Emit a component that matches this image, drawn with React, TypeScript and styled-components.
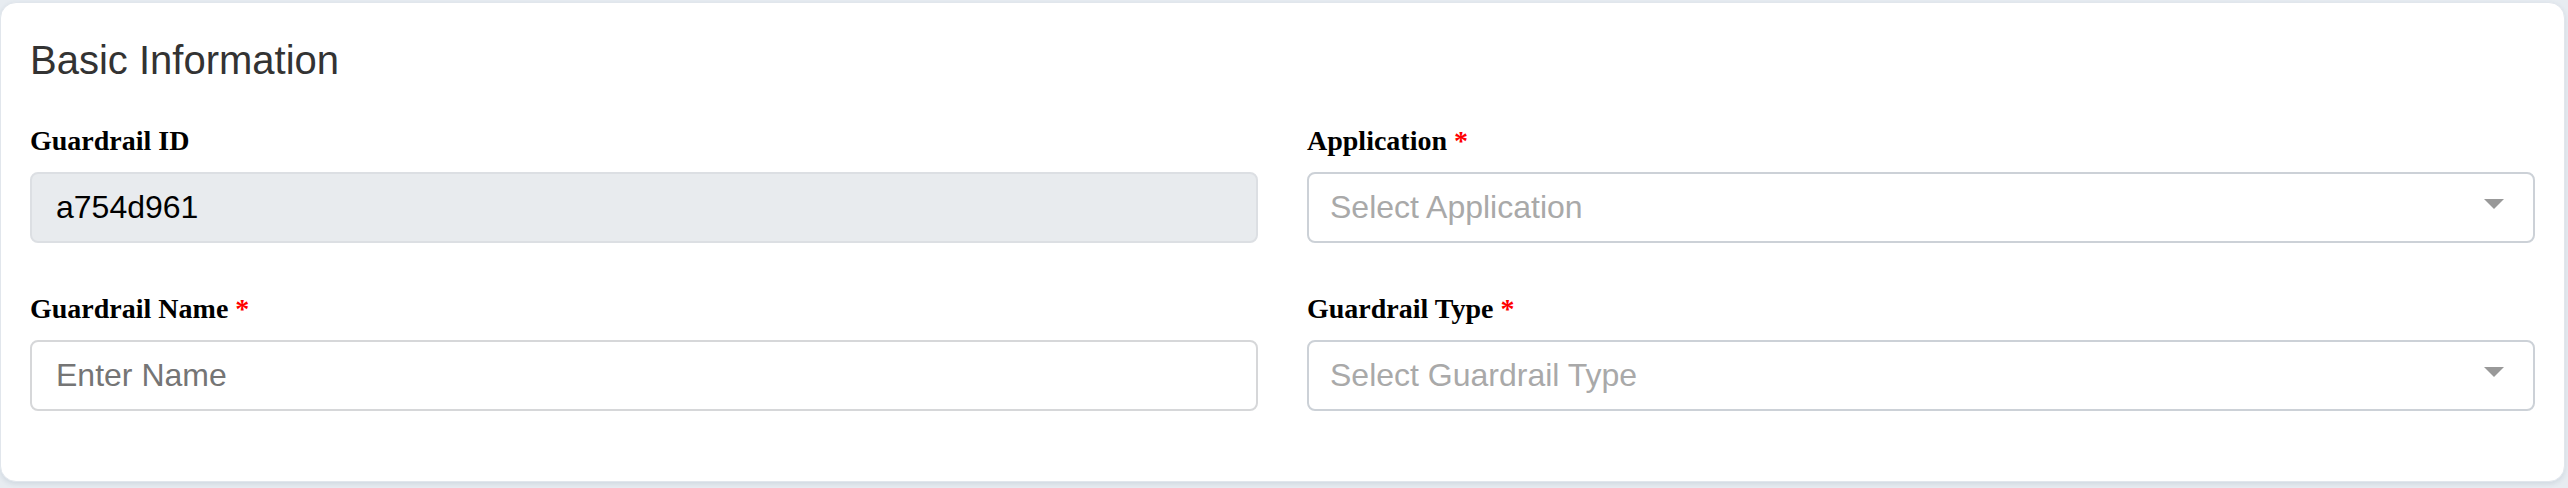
import React from "react";
import styled, { createGlobalStyle } from "styled-components";

const GlobalStyle = createGlobalStyle`
  html, body {
    margin: 0;
    padding: 0;
    background: #e7ecf1;
  }
  body {
    font-family: "Liberation Sans", Arial, sans-serif;
  }
  * { box-sizing: border-box; }
`;

const Page = styled.div`
  padding: 2px 3px 6px 0;
`;

const Card = styled.section`
  background: #ffffff;
  border: 1px solid #e1e6ec;
  border-radius: 16px;
  box-shadow: 0 2px 5px rgba(40, 70, 110, 0.12);
  padding: 33px 29px 70px 29px;
`;

const Title = styled.h2`
  margin: 0 0 40px 0;
  font-family: "Liberation Sans", Arial, sans-serif;
  font-weight: 400;
  font-size: 40px;
  line-height: 48px;
  color: #333333;
`;

const Grid = styled.div`
  display: grid;
  grid-template-columns: 1fr 1fr;
  column-gap: 49px;
  row-gap: 49px;
`;

const Field = styled.div`
  display: flex;
  flex-direction: column;
  min-width: 0;
`;

const Label = styled.label`
  display: block;
  margin: 0 0 14px 0;
  font-family: "Liberation Serif", "Times New Roman", serif;
  font-weight: 700;
  font-size: 28px;
  line-height: 34px;
  color: #000000;
`;

const Required = styled.span`
  color: #ff0000;
`;

const TextInput = styled.input<{ $readOnlyLook?: boolean }>`
  display: block;
  width: 100%;
  height: 71px;
  margin: 0;
  padding: 0 22px 0 24px;
  border: 2px solid ${(p) => (p.$readOnlyLook ? "#dcdfe3" : "#d6d7d9")};
  border-radius: 8px;
  background: ${(p) => (p.$readOnlyLook ? "#e8ebee" : "#ffffff")};
  font-family: "Liberation Sans", Arial, sans-serif;
  font-size: 32px;
  color: #000000;
  outline: none;

  &::placeholder {
    color: #757575;
    opacity: 1;
  }
`;

const SelectBox = styled.div`
  display: flex;
  align-items: center;
  justify-content: space-between;
  height: 71px;
  padding: 0 29px 0 21px;
  border: 2px solid #ccd1d7;
  border-radius: 8px;
  background: #ffffff;
  cursor: pointer;
`;

const Placeholder = styled.span`
  font-family: "Liberation Sans", Arial, sans-serif;
  font-size: 32px;
  color: #a9a9a9;
  white-space: nowrap;
`;

const Caret = styled.svg`
  display: block;
  width: 20px;
  height: 10px;
  margin-top: -7px;
  flex: none;
`;

const SelectField: React.FC<{ placeholder: string }> = ({ placeholder }) => (
  <SelectBox role="combobox" aria-expanded={false}>
    <Placeholder>{placeholder}</Placeholder>
    <Caret viewBox="0 0 20 10" aria-hidden="true">
      <polygon points="0,0 20,0 10,10" fill="#999999" />
    </Caret>
  </SelectBox>
);

export default function App() {
  return (
    <>
      <GlobalStyle />
      <Page>
        <Card>
          <Title>Basic Information</Title>
          <Grid>
            <Field>
              <Label>Guardrail ID</Label>
              <TextInput $readOnlyLook readOnly value="a754d961" />
            </Field>
            <Field>
              <Label>
                Application <Required>*</Required>
              </Label>
              <SelectField placeholder="Select Application" />
            </Field>
            <Field>
              <Label>
                Guardrail Name <Required>*</Required>
              </Label>
              <TextInput placeholder="Enter Name" />
            </Field>
            <Field>
              <Label>
                Guardrail Type <Required>*</Required>
              </Label>
              <SelectField placeholder="Select Guardrail Type" />
            </Field>
          </Grid>
        </Card>
      </Page>
    </>
  );
}
